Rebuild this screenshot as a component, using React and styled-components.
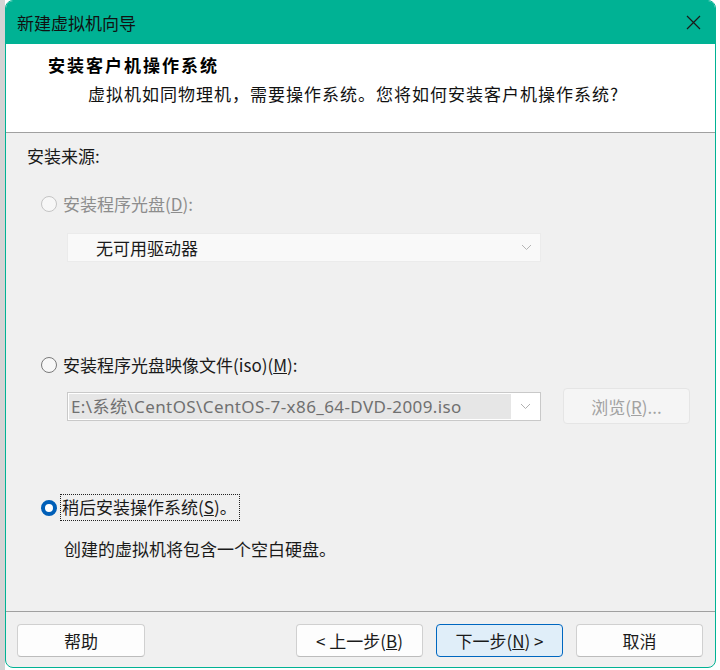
import React from 'react';
import styled, { createGlobalStyle } from 'styled-components';

const GlobalStyle = createGlobalStyle`
  html, body {
    margin: 0;
    padding: 0;
    background: #ffffff;
  }
  body {
    font-family: "Noto Sans CJK SC", "Noto Sans", sans-serif;
  }
`;

const Page = styled.div`
  width: 720px;
  height: 670px;
  display: flex;
  background: linear-gradient(to right, #d4d4d4 0, #d4d4d4 5px, #ffffff 5px);
`;

const Window = styled.div`
  width: 711px;
  height: 668px;
  margin-left: 5px;
  display: flex;
  flex-direction: column;
  background: #f0f0f0;
  border: 1px solid #00b294;
  border-radius: 8px;
  overflow: hidden;
  box-sizing: border-box;
`;

const TitleBar = styled.div`
  height: 43px;
  flex-shrink: 0;
  display: flex;
  align-items: center;
  justify-content: space-between;
  background: #00b294;
  padding: 0 14px 0 11px;
  font-size: 17px;
  color: #111;
`;

const CloseBtn = styled.div`
  width: 16px;
  height: 16px;
  display: flex;
  align-items: center;
  justify-content: center;
`;

const Header = styled.div`
  height: 89px;
  flex-shrink: 0;
  background: #ffffff;
  border-bottom: 1px solid #a0a0a0;
  padding: 8px 0 0 42px;
  box-sizing: border-box;
`;

const HeaderTitle = styled.div`
  font-size: 17px;
  font-weight: 700;
  line-height: 26px;
  color: #000;
  letter-spacing: 2px;
`;

const HeaderSub = styled.div`
  font-size: 17px;
  line-height: 26px;
  color: #111;
  padding-left: 40px;
  margin-top: 3px;
  letter-spacing: 1px;
`;

const Body = styled.div`
  flex: 1;
  padding: 11px 0 0 21px;
  display: flex;
  flex-direction: column;
  font-size: 17px;
  color: #1a1a1a;
`;

const SectionLabel = styled.div`
  line-height: 24px;
`;

const RadioRow = styled.div`
  display: flex;
  align-items: center;
  gap: 6px;
  margin-left: 14px;
  margin-top: ${(p) => p.mt || 0}px;
  line-height: 24px;
  color: ${(p) => (p.disabled ? '#8d8d8d' : '#1a1a1a')};
`;

const Radio = styled.span`
  width: 16px;
  height: 16px;
  box-sizing: border-box;
  border-radius: 50%;
  flex-shrink: 0;
  background: ${(p) => (p.checked ? '#ffffff' : '#f7f7f7')};
  border: ${(p) =>
    p.checked ? '4.5px solid #005fb8' : p.disabled ? '1px solid #c4c4c4' : '1px solid #7a7a7a'};
`;

const FocusLabel = styled.span`
  outline: 1px dotted #222;
  outline-offset: 0;
  padding: 0 2px 1px 1px;
  margin-left: -2px;
`;

const Select = styled.div`
  width: 474px;
  height: 29px;
  box-sizing: border-box;
  margin: 17px 0 0 40px;
  background: #f9f9f9;
  border: 1px solid #ebebeb;
  display: flex;
  align-items: center;
  justify-content: space-between;
  padding: 0 8px 0 28px;
  color: #1a1a1a;
`;

const ComboRow = styled.div`
  display: flex;
  align-items: center;
  margin: 11px 0 0 40px;
  gap: 22px;
`;

const Combo = styled.div`
  width: 474px;
  height: 29px;
  box-sizing: border-box;
  background: #ffffff;
  border: 1px solid #c9c9c9;
  display: flex;
  align-items: stretch;
  padding: 1px;
`;

const ComboField = styled.div`
  flex: 1;
  background: #e6e6e6;
  color: #707070;
  font-family: "Noto Sans", "Noto Sans CJK SC", sans-serif;
  font-size: 17px;
  letter-spacing: 0.4px;
  line-height: 25px;
  padding-left: 2px;
  white-space: nowrap;
  overflow: hidden;
`;

const ComboArrow = styled.div`
  width: 28px;
  display: flex;
  align-items: center;
  justify-content: center;
`;

const Button = styled.div`
  width: ${(p) => p.w || 127}px;
  height: ${(p) => p.h || 33}px;
  box-sizing: border-box;
  display: flex;
  align-items: center;
  justify-content: center;
  border-radius: 4px;
  font-size: 17px;
  background: ${(p) => (p.primary ? '#e0eef9' : p.disabled ? '#f5f5f5' : '#fdfdfd')};
  border: 1px solid ${(p) => (p.primary ? '#0067c0' : p.disabled ? '#e5e5e5' : '#d0d0d0')};
  border-bottom-color: ${(p) => (p.primary ? '#0067c0' : p.disabled ? '#e5e5e5' : '#bcbcbc')};
  color: ${(p) => (p.disabled ? '#a2a2a2' : '#1a1a1a')};
  white-space: pre;
`;

const Desc = styled.div`
  margin: 17px 0 0 37px;
  line-height: 24px;
`;

const Footer = styled.div`
  flex-shrink: 0;
  height: 56px;
  border-top: 1px solid #a0a0a0;
  box-sizing: border-box;
  display: flex;
  align-items: flex-start;
  padding: 12px 12px 0 11px;
`;

const Spacer = styled.div`
  flex: 1;
`;

const ButtonGroup = styled.div`
  display: flex;
  gap: 13px;
`;

const Chevron = ({ color = '#9a9a9a' }) => (
  <svg width="11" height="7" viewBox="0 0 11 7">
    <path d="M1 1 L5.5 5.5 L10 1" fill="none" stroke={color} strokeWidth="1" />
  </svg>
);

const CloseIcon = () => (
  <svg width="15" height="15" viewBox="0 0 15 15">
    <path d="M1 1 L14 14 M14 1 L1 14" stroke="#1a1a1a" strokeWidth="1.2" />
  </svg>
);

export default function App() {
  return (
    <>
      <GlobalStyle />
      <Page>
        <Window>
          <TitleBar>
            <span>新建虚拟机向导</span>
            <CloseBtn>
              <CloseIcon />
            </CloseBtn>
          </TitleBar>
          <Header>
            <HeaderTitle>安装客户机操作系统</HeaderTitle>
            <HeaderSub>虚拟机如同物理机，需要操作系统。您将如何安装客户机操作系统?</HeaderSub>
          </Header>
          <Body>
            <SectionLabel>安装来源:</SectionLabel>
            <RadioRow mt={24} disabled>
              <Radio disabled />
              <span>
                安装程序光盘(<u>D</u>):
              </span>
            </RadioRow>
            <Select>
              <span>无可用驱动器</span>
              <Chevron color="#b5b5b5" />
            </Select>
            <RadioRow mt={91}>
              <Radio />
              <span>
                安装程序光盘映像文件(iso)(<u>M</u>):
              </span>
            </RadioRow>
            <ComboRow>
              <Combo>
                <ComboField>E:\系统\CentOS\CentOS-7-x86_64-DVD-2009.iso</ComboField>
                <ComboArrow>
                  <Chevron color="#b0b0b0" />
                </ComboArrow>
              </Combo>
              <Button w={127} h={36} disabled>
                浏览(<u>R</u>)...
              </Button>
            </ComboRow>
            <RadioRow mt={71}>
              <Radio checked />
              <FocusLabel>
                稍后安装操作系统(<u>S</u>)。
              </FocusLabel>
            </RadioRow>
            <Desc>创建的虚拟机将包含一个空白硬盘。</Desc>
          </Body>
          <Footer>
            <Button w={128}>帮助</Button>
            <Spacer />
            <ButtonGroup>
              <Button>
                {'< 上一步('}<u>B</u>)
              </Button>
              <Button primary>
                下一步(<u>N</u>){' >'}
              </Button>
              <Button>取消</Button>
            </ButtonGroup>
          </Footer>
        </Window>
      </Page>
    </>
  );
}
